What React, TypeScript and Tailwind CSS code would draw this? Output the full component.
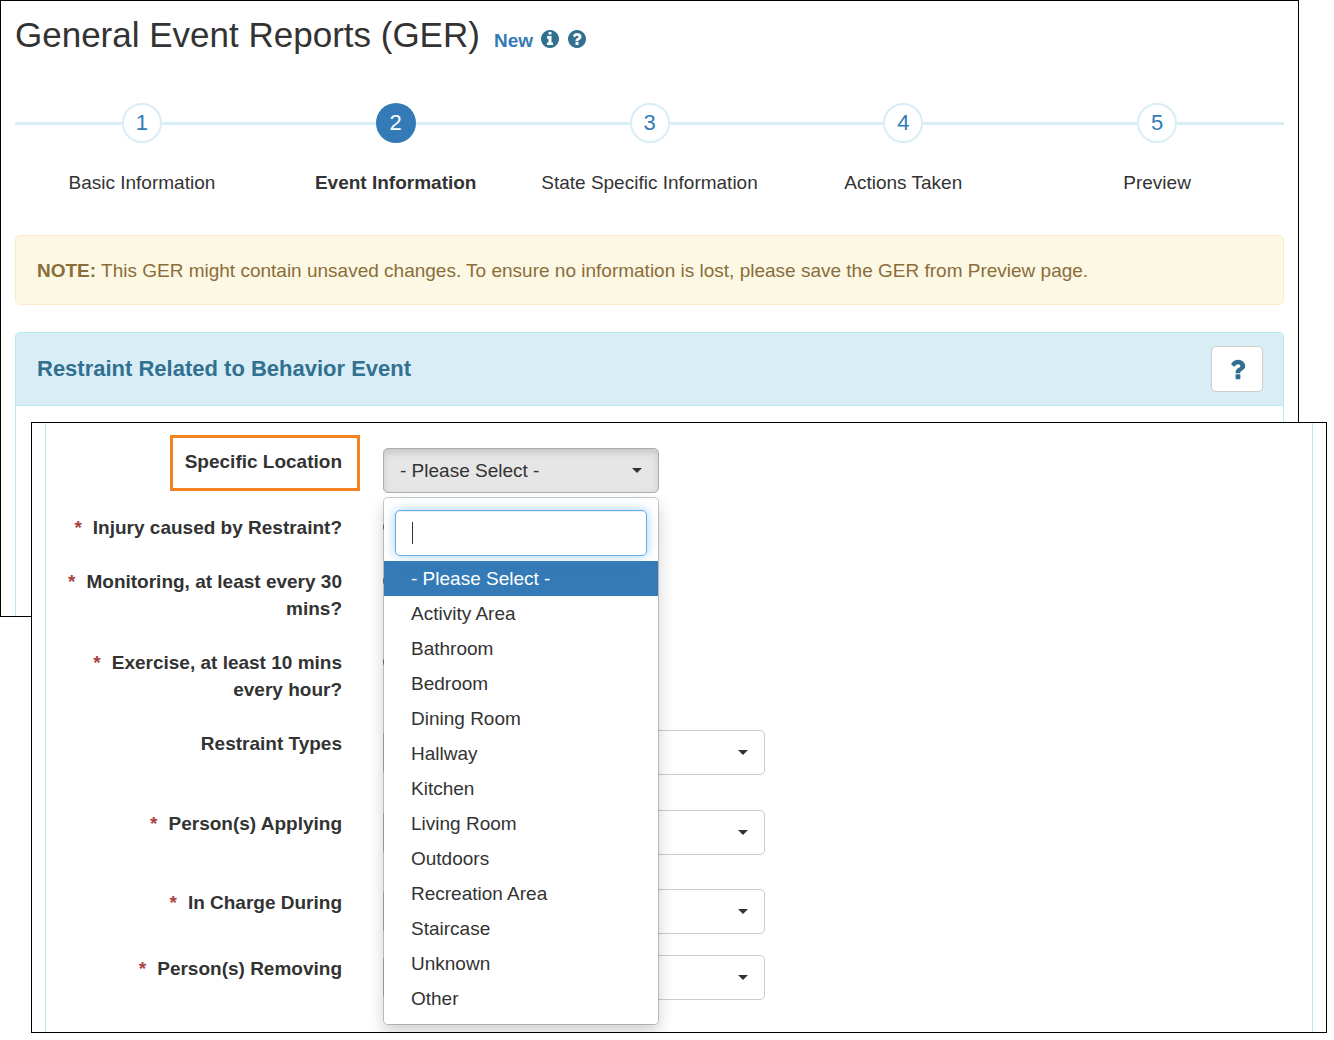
import React, { useState } from 'react';

interface Field {
  id: string;
  label: string;
  required: boolean;
  kind: 'radio' | 'select';
  rowClass: string;
}

const STEPS = [
  'Basic Information',
  'Event Information',
  'State Specific Information',
  'Actions Taken',
  'Preview',
];

const LOCATIONS = [
  '- Please Select -',
  'Activity Area',
  'Bathroom',
  'Bedroom',
  'Dining Room',
  'Hallway',
  'Kitchen',
  'Living Room',
  'Outdoors',
  'Recreation Area',
  'Staircase',
  'Unknown',
  'Other',
];

const FIELDS: Field[] = [
  { id: 'injury', label: 'Injury caused by Restraint?', required: true, kind: 'radio', rowClass: 'min-h-[54px]' },
  { id: 'monitoring', label: 'Monitoring, at least every 30 mins?', required: true, kind: 'radio', rowClass: 'min-h-[81px]' },
  { id: 'exercise', label: 'Exercise, at least 10 mins every hour?', required: true, kind: 'radio', rowClass: 'min-h-[81px]' },
  { id: 'types', label: 'Restraint Types', required: false, kind: 'select', rowClass: 'min-h-[80px]' },
  { id: 'applying', label: 'Person(s) Applying', required: true, kind: 'select', rowClass: 'min-h-[79px]' },
  { id: 'in-charge', label: 'In Charge During', required: true, kind: 'select', rowClass: 'min-h-[66px]' },
  { id: 'removing', label: 'Person(s) Removing', required: true, kind: 'select', rowClass: 'min-h-[46px]' },
];

function InfoCircle() {
  return (
    <svg viewBox="128 128 1536 1536" className="h-[18px] w-[18px] fill-[#31708f]" aria-hidden="true">
      <path d="M1152 1376v-160q0-14-9-23t-23-9h-96v-512q0-14-9-23t-23-9h-320q-14 0-23 9t-9 23v160q0 14 9 23t23 9h96v320h-96q-14 0-23 9t-9 23v160q0 14 9 23t23 9h448q14 0 23-9t9-23zm-128-896v-160q0-14-9-23t-23-9h-192q-14 0-23 9t-9 23v160q0 14 9 23t23 9h192q14 0 23-9t9-23zm640 416q0 209-103 385.5t-279.5 279.5-385.5 103-385.5-103-279.5-279.5-103-385.5 103-385.5 279.5-279.5 385.5-103 385.5 103 279.5 279.5 103 385.5z" />
    </svg>
  );
}

function QuestionCircle() {
  return (
    <svg viewBox="128 128 1536 1536" className="h-[18px] w-[18px] fill-[#31708f]" aria-hidden="true">
      <path d="M1024 1376v-192q0-14-9-23t-23-9h-192q-14 0-23 9t-9 23v192q0 14 9 23t23 9h192q14 0 23-9t9-23zm256-672q0-88-55.5-163t-138.5-116-170-41q-243 0-371 213-15 24 8 42l132 100q7 6 19 6 16 0 25-12 53-68 86-92 34-24 86-24 48 0 85.5 26t37.5 59q0 38-20 61t-68 45q-63 28-115.5 86.5t-52.5 125.5v36q0 14 9 23t23 9h192q14 0 23-9t9-23q0-19 21.5-49.5t54.5-49.5q32-18 49-28.5t46-35 44.5-48 28-60.5 12.5-81zm384 192q0 209-103 385.5t-279.5 279.5-385.5 103-385.5-103-279.5-279.5-103-385.5 103-385.5 279.5-279.5 385.5-103 385.5 103 279.5 279.5 103 385.5z" />
    </svg>
  );
}

function QuestionMark() {
  return (
    <svg viewBox="0 0 1792 1792" className="h-[27px] w-[27px] fill-[#31708f]" aria-hidden="true">
      <path d="M1088 1256v240q0 16-12 28t-28 12h-240q-16 0-28-12t-12-28v-240q0-16 12-28t28-12h240q16 0 28 12t12 28zm316-600q0 54-15.5 101t-35 76.5-55 59.5-57.5 43.5-61 35.5q-41 23-68.5 65t-27.5 67q0 17-12 32.5t-28 15.5h-240q-15 0-25.5-18.5t-10.5-37.5v-45q0-83 65-156.5t143-108.5q59-27 84-56t25-76q0-42-46.5-74t-107.5-32q-65 0-108 29-35 25-107 115-13 16-31 16-12 0-25-8l-164-125q-13-10-15.5-25t5.5-28q160-266 464-266 80 0 161 31t146 83 106 127.5 41 158.5z" />
    </svg>
  );
}

function Caret({ className = '' }: { className?: string }) {
  return (
    <svg viewBox="0 0 10 5" className={`h-[5px] w-[10px] fill-[#333333] ${className}`} aria-hidden="true">
      <path d="M0 0h10L5 5z" />
    </svg>
  );
}

function Stepper({ current }: { current: number }) {
  return (
    <ol className="grid grid-cols-5">
      {STEPS.map((step, index) => {
        const active = index === current;
        return (
          <li key={step} className="flex flex-col items-center">
            <div className="flex w-full items-center">
              <span className="h-[3px] flex-1 bg-[#d9edf7]" />
              <button
                type="button"
                aria-label={`Step ${index + 1}`}
                className={
                  active
                    ? 'h-10 w-10 rounded-full bg-[#337ab7] text-[22px] leading-9 text-white'
                    : 'h-10 w-10 rounded-full border-2 border-[#d9edf7] bg-white text-[22px] leading-9 text-[#337ab7]'
                }
              >
                {index + 1}
              </button>
              <span className="h-[3px] flex-1 bg-[#d9edf7]" />
            </div>
            <span className={active ? 'mt-[26px] font-bold' : 'mt-[26px]'}>{step}</span>
          </li>
        );
      })}
    </ol>
  );
}

function LocationPicker() {
  const [selected, setSelected] = useState(LOCATIONS[0]);
  const [query, setQuery] = useState('');
  const matches = LOCATIONS.filter((name) => name.toLowerCase().includes(query.toLowerCase()));

  return (
    <div className="relative w-[276px]">
      <button
        id="location"
        type="button"
        aria-haspopup="listbox"
        aria-expanded="true"
        className="flex h-[45px] w-full items-center justify-between rounded-[5px] border border-[#adadad] bg-[#e6e6e6] px-4 shadow-[inset_0_4px_7px_rgba(0,0,0,0.125)]"
      >
        {selected}
        <Caret />
      </button>

      {/* Open menu with search box */}
      <div className="absolute top-[49px] left-0 z-10 w-full rounded-[5px] border border-black/20 bg-white bg-clip-padding pb-2 shadow-[0_8px_16px_rgba(0,0,0,0.175)]">
        <div className="relative px-[11px] pt-3 pb-[5px]">
          <input
            type="text"
            aria-label="Search locations"
            value={query}
            onChange={(e) => setQuery(e.target.value)}
            className="h-[46px] w-full rounded-[5px] border border-[#66afe9] bg-white px-4 shadow-[inset_0_1px_1px_rgba(0,0,0,0.075),0_0_11px_rgba(102,175,233,0.6)] outline-none"
          />
          {query === '' && <span className="absolute top-6 left-7 h-[22px] w-px bg-[#333333]" />}
        </div>
        <ul role="listbox" aria-label="Specific Location">
          {matches.map((name) => (
            <li
              key={name}
              role="option"
              aria-selected={name === selected}
              onClick={() => setSelected(name)}
              className={
                name === selected
                  ? 'cursor-pointer bg-[#337ab7] px-[27px] py-1 text-white'
                  : 'cursor-pointer px-[27px] py-1'
              }
            >
              {name}
            </li>
          ))}
        </ul>
      </div>
    </div>
  );
}

function FieldRow({ field }: { field: Field }) {
  return (
    <div className={`flex items-start gap-[41px] ${field.rowClass}`}>
      <label htmlFor={field.id} className="w-[296px] pl-5 text-right font-bold">
        {field.required && <span className="mr-[11px] text-[#a94442]">*</span>}
        {field.label}
      </label>
      {field.kind === 'radio' ? (
        <input id={field.id} name={field.id} type="radio" className="mt-[5px] h-4 w-4" />
      ) : (
        <div className="relative w-[382px]">
          <select
            id={field.id}
            className="h-[45px] w-full appearance-none rounded-[5px] border border-[#cccccc] bg-white px-4"
          />
          <Caret className="pointer-events-none absolute top-5 right-[17px]" />
        </div>
      )}
    </div>
  );
}

export default function App() {
  return (
    <div className="min-h-screen bg-white font-['Liberation_Sans',Arial,sans-serif] text-[19px] leading-[27px] text-[#333333]">
      <section className="mr-[35px] border border-black px-[14px] pt-[14px]">
        <header className="flex items-baseline">
          <h1 className="text-[35px] leading-10">General Event Reports (GER)</h1>
          <span className="ml-[14px] font-bold text-[#337ab7]">New</span>
          <span className="mt-2 ml-2 flex gap-[9px] self-center">
            <InfoCircle />
            <QuestionCircle />
          </span>
        </header>

        <div className="mt-12">
          <Stepper current={1} />
        </div>

        <div className="mt-[39px] rounded-[5px] border border-[#faebcc] bg-[#fcf8e3] px-[21px] pt-[21px] pb-5 text-[#8a6d3b]">
          <strong>NOTE:</strong> This GER might contain unsaved changes. To ensure no information is lost, please save
          the GER from Preview page.
        </div>

        <div className="mt-[27px] rounded-t-[5px] border border-b-0 border-[#bce8f1]">
          <div className="flex items-center justify-between rounded-t-[4px] border-b border-[#bce8f1] bg-[#d9edf7] py-[13px] pr-5 pl-[21px]">
            <h2 className="pb-[2px] text-[22px] font-bold text-[#31708f]">Restraint Related to Behavior Event</h2>
            <button
              type="button"
              aria-label="Help"
              className="flex h-[46px] w-[52px] items-center justify-center rounded-[5px] border border-[#cccccc] bg-white"
            >
              <QuestionMark />
            </button>
          </div>
          <div className="h-[210px]" />
        </div>
      </section>

      {/* Lower part of the form, laid over the end of the page above */}
      <section className="relative -mt-[195px] mr-[7px] ml-[31px] overflow-hidden border border-black bg-white px-[13px]">
        <form className="border-x border-[#bce8f1] pt-[25px] pb-[31px]">
          <div className="flex min-h-[66px] items-start gap-[41px]">
            <div className="flex w-[296px] justify-end">
              <label
                htmlFor="location"
                className="-mt-[13px] -mr-[18px] h-14 border-[3px] border-[#f58220] pt-[10px] pr-[15px] pl-3 font-bold"
              >
                Specific Location
              </label>
            </div>
            <LocationPicker />
          </div>
          {FIELDS.map((field) => (
            <FieldRow key={field.id} field={field} />
          ))}
        </form>
      </section>
    </div>
  );
}
